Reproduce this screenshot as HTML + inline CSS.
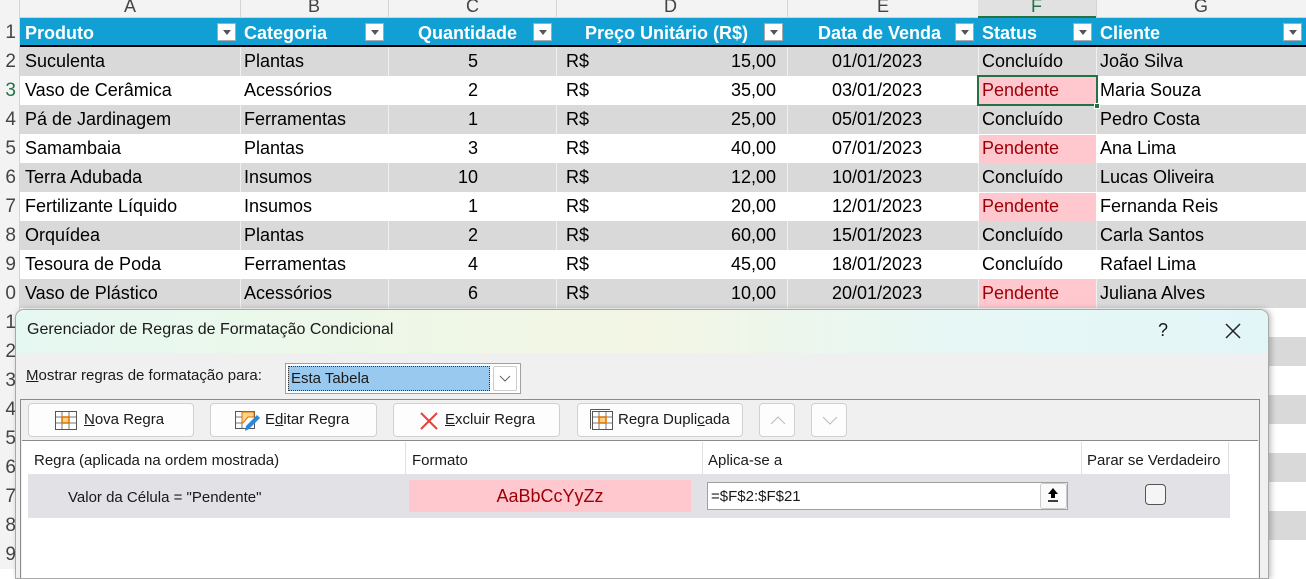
<!DOCTYPE html>
<html><head><meta charset="utf-8"><style>
*{margin:0;padding:0;box-sizing:border-box}
body{width:1306px;height:569px;overflow:hidden;background:#fff;font-family:"Liberation Sans",sans-serif;position:relative}
.a{position:absolute;white-space:nowrap}
.cell{position:absolute;height:29px;line-height:29px;font-size:18px;color:#000;white-space:nowrap}
.d{font-family:"Liberation Sans",sans-serif;font-size:15px;color:#1a1a1a}
.btn{position:absolute;top:403px;height:34px;background:#fdfdfd;border:1px solid #d0d0d0;border-radius:4px;font-size:15px;line-height:32px;color:#1a1a1a}
.dd{position:absolute;right:4px;top:5px;width:19px;height:18px;background:#fff;border:1px solid #aaa}
.dd:after{content:"";position:absolute;left:5px;top:6px;border-left:4px solid transparent;border-right:4px solid transparent;border-top:5px solid #555}
</style></head><body>
<div class="a" style="left:0;top:0;width:1306px;height:18px;background:#f3f3f3;border-bottom:1px solid #d4d4d4"></div>
<div class="a" style="left:0;top:0;width:20px;height:569px;background:#f3f3f3;border-right:1px solid #d4d4d4"></div>
<div class="a" style="left:0;top:-5px;width:1306px;font-size:18px;color:#444;line-height:22px">
<span class="a" style="left:124px">A</span><span class="a" style="left:308px">B</span><span class="a" style="left:466px">C</span><span class="a" style="left:664px">D</span><span class="a" style="left:877px">E</span><span class="a" style="left:1194px">G</span></div>
<div class="a" style="left:978px;top:0;width:118px;height:18px;background:#e1e1e1;border-bottom:2px solid #217346"></div>
<div class="a" style="left:1031px;top:-5px;font-size:18px;color:#217346;line-height:22px">F</div>
<div class="a" style="left:240px;top:0;width:1px;height:18px;background:#d4d4d4"></div>
<div class="a" style="left:388px;top:0;width:1px;height:18px;background:#d4d4d4"></div>
<div class="a" style="left:556px;top:0;width:1px;height:18px;background:#d4d4d4"></div>
<div class="a" style="left:787px;top:0;width:1px;height:18px;background:#d4d4d4"></div>
<div class="a" style="left:1096px;top:0;width:1px;height:18px;background:#d4d4d4"></div>

<div class="a" style="left:20px;top:18px;width:1286px;height:27px;background:#119fd4"></div>
<div class="a" style="left:20px;top:45px;width:1286px;height:2px;background:#000"></div>
<div class="a" style="left:20px;top:47px;width:1286px;height:29px;background:#d9d9d9"></div>
<div class="a" style="left:20px;top:105px;width:1286px;height:29px;background:#d9d9d9"></div>
<div class="a" style="left:20px;top:163px;width:1286px;height:29px;background:#d9d9d9"></div>
<div class="a" style="left:20px;top:221px;width:1286px;height:29px;background:#d9d9d9"></div>
<div class="a" style="left:20px;top:279px;width:1286px;height:29px;background:#d9d9d9"></div>
<div class="a" style="left:20px;top:337px;width:1286px;height:29px;background:#d9d9d9"></div>
<div class="a" style="left:20px;top:395px;width:1286px;height:29px;background:#d9d9d9"></div>
<div class="a" style="left:20px;top:453px;width:1286px;height:29px;background:#d9d9d9"></div>
<div class="a" style="left:20px;top:511px;width:1286px;height:29px;background:#d9d9d9"></div>
<div class="a" style="left:240px;top:47px;width:1px;height:522px;background:#fff;opacity:.6"></div>
<div class="a" style="left:388px;top:47px;width:1px;height:522px;background:#fff;opacity:.6"></div>
<div class="a" style="left:556px;top:47px;width:1px;height:522px;background:#fff;opacity:.6"></div>
<div class="a" style="left:787px;top:47px;width:1px;height:522px;background:#fff;opacity:.6"></div>
<div class="a" style="left:978px;top:47px;width:1px;height:522px;background:#fff;opacity:.6"></div>
<div class="a" style="left:1096px;top:47px;width:1px;height:522px;background:#fff;opacity:.6"></div>
<div class="a" style="left:979px;top:77px;width:117px;height:28px;background:#ffc7ce"></div>
<div class="a" style="left:979px;top:135px;width:117px;height:28px;background:#ffc7ce"></div>
<div class="a" style="left:979px;top:193px;width:117px;height:28px;background:#ffc7ce"></div>
<div class="a" style="left:979px;top:280px;width:117px;height:28px;background:#ffc7ce"></div>

<div class="a" style="left:0;top:18px;width:20px;font-size:19px;color:#444;line-height:29px;text-align:right;padding-right:4px">
<div>1</div><div>2</div><div style="color:#217346">3</div><div>4</div><div>5</div><div>6</div><div>7</div><div>8</div><div>9</div><div>0</div><div>1</div><div>2</div><div>3</div><div>4</div><div>5</div><div>6</div><div>7</div><div>8</div><div>9</div></div>

<div style="position:absolute;left:0;top:18px">
<div class="cell" style="left:25px;color:#fff;font-weight:bold;height:27px;line-height:30px">Produto</div>
<div class="cell" style="left:244px;color:#fff;font-weight:bold;height:27px;line-height:30px">Categoria</div>
<div class="cell" style="left:418px;color:#fff;font-weight:bold;height:27px;line-height:30px">Quantidade</div>
<div class="cell" style="left:585px;color:#fff;font-weight:bold;height:27px;line-height:30px">Preço Unitário (R$)</div>
<div class="cell" style="left:818px;color:#fff;font-weight:bold;height:27px;line-height:30px">Data de Venda</div>
<div class="cell" style="left:982px;color:#fff;font-weight:bold;height:27px;line-height:30px">Status</div>
<div class="cell" style="left:1100px;color:#fff;font-weight:bold;height:27px;line-height:30px">Cliente</div>
</div>
<div class="a" style="left:216px;top:18px;width:24px;height:27px"><div class="dd"></div></div>
<div class="a" style="left:364px;top:18px;width:24px;height:27px"><div class="dd"></div></div>
<div class="a" style="left:532px;top:18px;width:24px;height:27px"><div class="dd"></div></div>
<div class="a" style="left:763px;top:18px;width:24px;height:27px"><div class="dd"></div></div>
<div class="a" style="left:954px;top:18px;width:24px;height:27px"><div class="dd"></div></div>
<div class="a" style="left:1072px;top:18px;width:24px;height:27px"><div class="dd"></div></div>
<div class="a" style="left:1282px;top:18px;width:24px;height:27px"><div class="dd"></div></div>

<div id="d" style="position:absolute;left:0;top:47px"></div>
<script>
var r=[["Suculenta","Plantas","5","15,00","01/01/2023","Concluído","João Silva"],
["Vaso de Cerâmica","Acessórios","2","35,00","03/01/2023","Pendente","Maria Souza"],
["Pá de Jardinagem","Ferramentas","1","25,00","05/01/2023","Concluído","Pedro Costa"],
["Samambaia","Plantas","3","40,00","07/01/2023","Pendente","Ana Lima"],
["Terra Adubada","Insumos","10","12,00","10/01/2023","Concluído","Lucas Oliveira"],
["Fertilizante Líquido","Insumos","1","20,00","12/01/2023","Pendente","Fernanda Reis"],
["Orquídea","Plantas","2","60,00","15/01/2023","Concluído","Carla Santos"],
["Tesoura de Poda","Ferramentas","4","45,00","18/01/2023","Concluído","Rafael Lima"],
["Vaso de Plástico","Acessórios","6","10,00","20/01/2023","Pendente","Juliana Alves"]];
var h="";r.forEach(function(x,i){var t=i*29;
h+='<div class="cell" style="left:25px;top:'+t+'px">'+x[0]+'</div>';
h+='<div class="cell" style="left:244px;top:'+t+'px">'+x[1]+'</div>';
h+='<div class="cell" style="left:388px;width:90px;text-align:right;top:'+t+'px">'+x[2]+'</div>';
h+='<div class="cell" style="left:566px;top:'+t+'px">R$</div>';
h+='<div class="cell" style="left:660px;width:116px;text-align:right;top:'+t+'px">'+x[3]+'</div>';
h+='<div class="cell" style="left:832px;top:'+t+'px">'+x[4]+'</div>';
h+='<div class="cell" style="left:982px;top:'+t+'px;'+(x[5]=="Pendente"?"color:#9c0006":"")+'">'+x[5]+'</div>';
h+='<div class="cell" style="left:1100px;top:'+t+'px">'+x[6]+'</div>';});
document.getElementById("d").innerHTML=h;
</script>
<div class="a" style="left:977px;top:75px;width:121px;height:31px;border:2px solid #217346"></div>
<div class="a" style="left:1094px;top:103px;width:6px;height:6px;background:#217346;border:1px solid #fff"></div>

<div class="a" style="left:15px;top:309px;width:1254px;height:270px;border:1px solid #a8a8a8;border-radius:9px 9px 0 0;background:#f0f0f0;box-shadow:2px 0 6px rgba(0,0,0,.25);overflow:hidden">
 <div class="a" style="left:0;top:0;width:1252px;height:43px;background:linear-gradient(90deg,#e6f8f2 0%,#eff7e6 35%,#f3f6e4 50%,#e6f7f5 75%,#e3f6f7 100%)"></div>
 <div class="a d" style="left:11px;top:11px;font-size:16px">Gerenciador de Regras de Formatação Condicional</div>
 <div class="a d" style="left:1142px;top:10px;font-size:18px">?</div>
 <svg class="a" style="left:1208px;top:12px" width="18" height="18"><path d="M2 2L16 16M16 2L2 16" stroke="#222" stroke-width="1.5"/></svg>
 <div class="a d" style="left:10px;top:57px"><u>M</u>ostrar regras de formatação para:</div>
 <div class="a" style="left:269px;top:53px;width:236px;height:31px;border:1px solid #a0a0a0;background:#fff">
  <div class="a" style="left:2px;top:2px;width:202px;height:25px;background:#99c9ef;border:1px dotted #333"></div>
  <div class="a d" style="left:5px;top:6px;font-size:15px">Esta Tabela</div>
  <div class="a" style="left:207px;top:2px;width:24px;height:25px;border:1px solid #ccc;border-radius:2px"></div>
  <svg class="a" style="left:213px;top:11px" width="12" height="8"><path d="M1 1L6 6L11 1" stroke="#666" fill="none"/></svg>
 </div>
 <div class="a" style="left:4px;top:89px;width:1240px;height:200px;border:1px solid #8a8a8a;background:#f0f0f0"></div>
 <div class="a" style="left:6px;top:130px;width:1236px;height:160px;background:#fff;border-top:1px solid #8a8a8a"></div>
 <div class="a d" style="left:18px;top:142px">Regra (aplicada na ordem mostrada)</div>
 <div class="a" style="left:389px;top:132px;width:1px;height:32px;background:#e0e0e0"></div>
 <div class="a d" style="left:396px;top:142px">Formato</div>
 <div class="a" style="left:686px;top:132px;width:1px;height:32px;background:#e0e0e0"></div>
 <div class="a d" style="left:692px;top:142px">Aplica-se a</div>
 <div class="a" style="left:1065px;top:132px;width:1px;height:32px;background:#e0e0e0"></div>
 <div class="a d" style="left:1071px;top:142px">Parar se Verdadeiro</div>
 <div class="a" style="left:1212px;top:132px;width:1px;height:32px;background:#e0e0e0"></div>
 <div class="a" style="left:12px;top:164px;width:1202px;height:44px;background:#e1e1e6"></div>
 <div class="a d" style="left:52px;top:179px">Valor da Célula = "Pendente"</div>
 <div class="a" style="left:393px;top:170px;width:282px;height:32px;background:#ffc7ce;color:#9c0006;font-size:18px;text-align:center;line-height:32px">AaBbCcYyZz</div>
 <div class="a" style="left:691px;top:172px;width:361px;height:28px;background:#fff;border:1px solid #a0a0a0"></div>
 <div class="a d" style="left:695px;top:178px">=$F$2:$F$21</div>
 <div class="a" style="left:1024px;top:173px;width:27px;height:26px;border:1px solid #ccc;border-radius:3px;background:#fafafa"></div>
 <svg class="a" style="left:1030px;top:177px" width="14" height="16"><path d="M7 1L2 7H5V11H9V7H12Z" fill="#000"/><path d="M2 14H12" stroke="#000" stroke-width="1.5"/></svg>
 <div class="a" style="left:1129px;top:174px;width:21px;height:21px;border:1px solid #555;border-radius:4px;background:#f5f5f5"></div>
</div>
<div class="btn" style="left:28px;width:166px"><svg class="a" style="left:26px;top:7px" width="22" height="19"><rect x=".5" y=".5" width="21" height="18" fill="#fff" stroke="#555"/><path d="M7 1V18M14 1V18M1 6H21M1 12H21" stroke="#777"/><rect x="7" y="6" width="7" height="6" fill="#f9d38c" stroke="#e07000" stroke-width="1.5"/></svg><span class="a" style="left:55px"><u>N</u>ova Regra</span></div>
<div class="btn" style="left:210px;width:167px"><svg class="a" style="left:24px;top:5px" width="26" height="24"><rect x=".5" y="2.5" width="19" height="17" fill="#fff" stroke="#555"/><path d="M7 3V19M1 8H19M1 14H8" stroke="#777"/><path d="M7 3H19V8H13L8 14H7Z" fill="#f9d38c" stroke="#e07000"/><path d="M10 22L11 17L22 6L25 9L14 20Z" fill="#2b88d8"/></svg><span class="a" style="left:54px">E<u>d</u>itar Regra</span></div>
<div class="btn" style="left:393px;width:167px"><svg class="a" style="left:25px;top:7px" width="20" height="20"><path d="M2 2L18 18M18 2L2 18" stroke="#e8403a" stroke-width="2"/></svg><span class="a" style="left:51px"><u>E</u>xcluir Regra</span></div>
<div class="btn" style="left:577px;width:166px"><svg class="a" style="left:12px;top:5px" width="24" height="22"><path d="M.5 .5H20M.5 .5V20" stroke="#555"/><rect x="2.5" y="2.5" width="20" height="18" fill="#fff" stroke="#555"/><path d="M9 3V20M16 3V20M3 8H22M3 14H22" stroke="#777"/><rect x="9" y="8" width="7" height="6" fill="#f9d38c" stroke="#e07000" stroke-width="1.5"/></svg><span class="a" style="left:40px">Regra Dupli<u>c</u>ada</span></div>
<div class="btn" style="left:759px;width:36px"><svg class="a" style="left:10px;top:12px" width="16" height="10"><path d="M1 8L8 1L15 8" stroke="#bbb" fill="none"/></svg></div>
<div class="btn" style="left:811px;width:36px"><svg class="a" style="left:10px;top:12px" width="16" height="10"><path d="M1 1L8 8L15 1" stroke="#bbb" fill="none"/></svg></div>
</body></html>
